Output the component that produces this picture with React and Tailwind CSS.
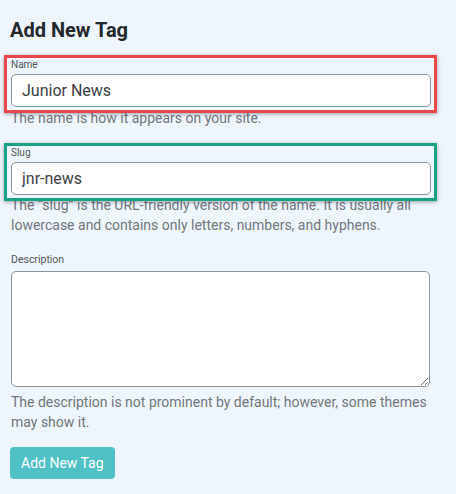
import React, { useState } from 'react';

const font = { fontFamily: 'Roboto, "Liberation Sans", sans-serif' };

const Field = ({ label, value, onChange, highlight }) => {
  return (
    <div className="relative">
      <label className="block text-[10px] leading-[14px] text-[#50555a] mb-[2px]">{label}</label>
      <input
        value={value}
        onChange={(e) => onChange(e.target.value)}
        className="block w-full h-[33px] rounded-[5px] border border-[#8e949b] bg-white px-[10px] text-[16px] text-[#3a3e43] outline-none"
      />
      {highlight && (
        <div
          className={`pointer-events-none absolute -left-[7px] -right-[6px] -top-[3px] -bottom-[6px] border-[3px] shadow-[0_1px_4px_rgba(0,0,0,0.35)] ${highlight}`}
        />
      )}
    </div>
  );
};

const App = () => {
  const [name, setName] = useState('Junior News');
  const [slug, setSlug] = useState('jnr-news');
  const [description, setDescription] = useState('');

  return (
    <div className="min-h-[494px] w-[456px] bg-[#eff5fc] pt-[17px] pl-[11px]" style={font}>
      <div className="w-[420px]">
        <h2 className="text-[20px] leading-[26px] font-bold text-[#23282d] -ml-px">Add New Tag</h2>

        <div className="mt-[15px]">
          <Field label="Name" value={name} onChange={setName} highlight="border-[#e5474b]" />
          <p className="mt-px text-[14px] leading-[20px] text-[#72777c]">The name is how it appears on your site.</p>
        </div>

        <div className="mt-[18px]">
          <Field label="Slug" value={slug} onChange={setSlug} highlight="border-[#17a185]" />
          <p className="text-[14px] leading-[20px] text-[#72777c]">
            The “slug” is the URL-friendly version of the name. It is usually all lowercase and contains only letters, numbers, and hyphens.
          </p>
        </div>

        <div className="mt-[18px]">
          <label className="block text-[10.5px] leading-[14px] text-[#50555a] mb-[4px]">Description</label>
          <textarea
            value={description}
            onChange={(e) => setDescription(e.target.value)}
            className="block w-[419px] h-[116px] rounded-[5px] border border-[#8e949b] bg-white px-[10px] py-[6px] text-[14px] outline-none"
          />
          <p className="mt-[5px] text-[14px] leading-[20px] text-[#72777c]">
            The description is not prominent by default; however, some themes may show it.
          </p>
        </div>

        <button
          type="button"
          className="mt-[15px] h-[32px] rounded-[4px] bg-[#4fc0c5] px-[11px] text-[14px] text-white -ml-px"
        >
          Add New Tag
        </button>
      </div>
    </div>
  );
};

export default App;
